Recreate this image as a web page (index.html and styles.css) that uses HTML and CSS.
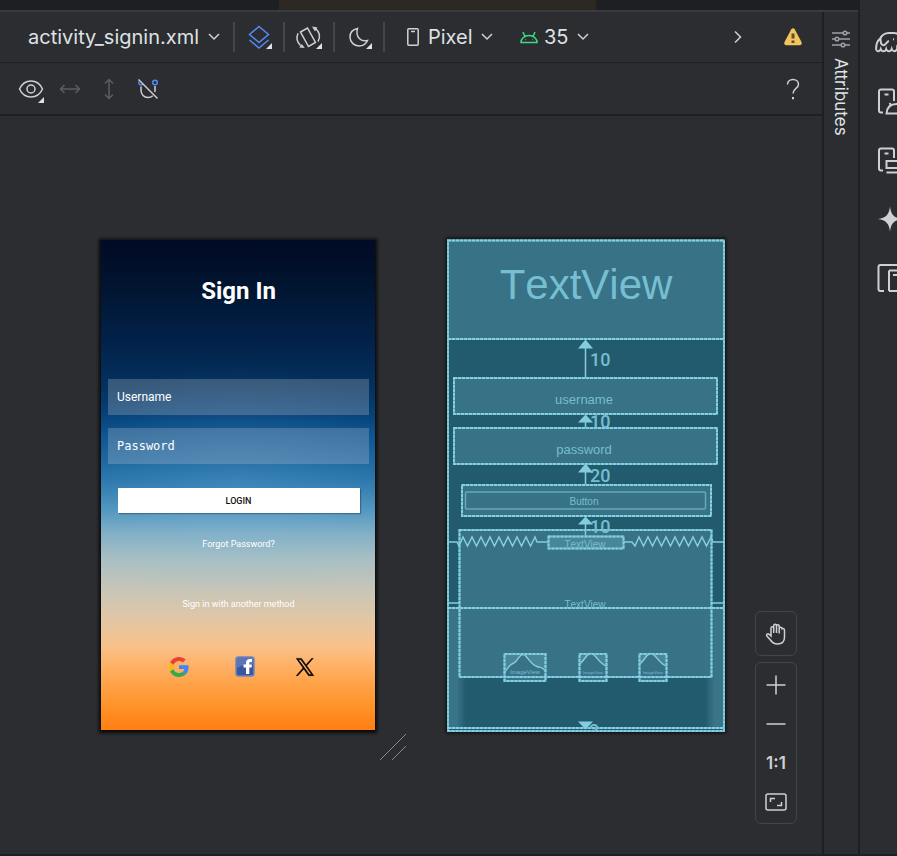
FILE: index.html
```html
<!DOCTYPE html>
<html lang="en">
<head>
<meta charset="utf-8">
<meta name="viewport" content="width=device-width, initial-scale=1">
<title>Layout editor</title>
<link rel="stylesheet" href="styles.css">
</head>
<body>
<div class="ide">
  <div class="tabs"><div class="tab-active"></div></div>
  <div class="work">
    <main class="editor">
      <header class="bar">
        <span class="pick file">
          <select aria-label="Layout file"><option>activity_signin.xml</option></select>
          <svg class="chev" viewBox="0 0 12 8"><path d="M1 1l5 5 5-5"/></svg>
        </span>
        <span class="sep"></span>
        <button class="tool wide" aria-label="Design surface">
          <svg width="26" height="26" viewBox="0 0 26 26" class="blue"><path d="M13 2.500l9.500 8-9.500 8-9.500-8z"/><path d="M3.500 16l9.500 8 9.500-8"/></svg>
          <i class="corner"></i>
        </button>
        <span class="sep"></span>
        <button class="tool wide" aria-label="Orientation">
          <svg width="26" height="26" viewBox="0 0 26 26"><path d="M4.500 8l7-4L19.500 18.500l-7 4z"/><path d="M2 9.300C.5 13 .8 18 4.500 21.500M19.500 4.500c4 3 5.300 8.500 2.500 13"/><path class="head" d="M8.800 24l-5.500-.5 2.500-3.500zM16 2.500l5.500 1-2.500 4z"/></svg>
          <i class="corner"></i>
        </button>
        <span class="sep"></span>
        <button class="tool wide" aria-label="Night mode">
          <svg width="26" height="26" viewBox="0 0 26 26"><path d="M11.500 4.500c-5 1-7.500 4.500-7.500 8.500 0 5 4 9 9 9 4 0 7-2 8.500-5.500-6 1.500-12.500-3-10-12z"/></svg>
          <i class="corner"></i>
        </button>
        <span class="sep"></span>
        <span class="pick device">
          <svg width="12" height="18" viewBox="0 0 12 18"><rect x=".8" y=".8" width="10.400" height="16.400" rx="1"/><path d="M4 3.500h4"/></svg>
          <select aria-label="Device"><option>Pixel</option></select>
          <svg class="chev" viewBox="0 0 12 8"><path d="M1 1l5 5 5-5"/></svg>
        </span>
        <span class="pick api">
          <svg width="18" height="14" viewBox="0 0 18 14" class="green"><path d="M1 12.500c0-4 3.500-7 8-7s8 3 8 7zM4.700 6L3 2M13.300 6L15 2"/><path d="M5.500 9.500h.6M12 9.500h.6"/></svg>
          <select aria-label="API level"><option>35</option></select>
          <svg class="chev" viewBox="0 0 12 8"><path d="M1 1l5 5 5-5"/></svg>
        </span>
        <span class="push"></span>
        <button class="tool more" aria-label="More"><svg width="8" height="14" viewBox="0 0 8 14"><path d="M1 1.500L6.500 7 1 12.500"/></svg></button>
        <button class="tool" aria-label="Warnings">
          <svg width="20" height="20" viewBox="0 0 20 20"><path class="warn" d="M8.300 2.300c.8-1.300 2.600-1.300 3.400 0l6.800 12.600c.8 1.500-.2 3.300-1.800 3.300H3.300c-1.600 0-2.600-1.800-1.800-3.300z"/><path class="mark" d="M10 6.500v5M10 13.500v2.500"/></svg>
        </button>
      </header>
      <div class="bar second">
        <button class="tool" aria-label="View options">
          <svg width="26" height="20" viewBox="0 0 26 20"><path d="M1.500 10C4 4.500 8 2 13 2s9 2.500 11.500 8C22 15.500 18 18 13 18S4 15.500 1.500 10z"/><circle cx="13" cy="10" r="4"/></svg>
          <i class="corner low"></i>
        </button>
        <button class="tool dim" aria-label="Expand horizontally"><svg width="22" height="12" viewBox="0 0 22 12"><path d="M1.500 6h19M5.500 2l-4 4 4 4M16.500 2l4 4-4 4"/></svg></button>
        <button class="tool dim" aria-label="Expand vertically"><svg width="12" height="22" viewBox="0 0 12 22"><path d="M6 1.500v19M2 5.500l4-4 4 4M2 16.500l4 4 4-4"/></svg></button>
        <button class="tool" aria-label="Autoconnect">
          <svg width="22" height="22" viewBox="0 0 22 22"><path d="M4 8.500V12c0 4.500 3 7.500 7 7.500 1.800 0 3.500-.6 4.800-1.800M18 8v4c0 .8-.1 1.400-.3 2"/><circle class="blue" cx="18" cy="4.500" r="2.300"/><path class="blue" d="M2 3.500c-.8 2 .5 3.500 2.500 3.500l1.500-1"/><path d="M1.500 1.500l19 19"/></svg>
        </button>
        <span class="push"></span>
        <button class="tool" aria-label="Help"><svg width="14" height="22" viewBox="0 0 14 22"><path d="M1.500 6.500C1.500 3.500 4 1.500 7 1.500s5.500 2 5.500 5c0 4-5.500 4-5.500 9"/><path class="dot" d="M7 19v2.300"/></svg></button>
      </div>

      <section class="canvas">
        <form class="phone">
          <h1>Sign In</h1>
          <input class="field" type="text" placeholder="Username" aria-label="Username">
          <input class="field mono" type="password" placeholder="Password" aria-label="Password">
          <button class="login" type="button">LOGIN</button>
          <a class="forgot" href="#">Forgot Password?</a>
          <p class="other">Sign in with another method</p>
          <div class="social">
            <a href="#" aria-label="Google"><svg width="20" height="20" viewBox="0 0 48 48"><path fill="#ea4335" d="M24 9.500c3.540 0 6.710 1.220 9.210 3.600l6.850-6.850C35.900 2.380 30.470 0 24 0 14.620 0 6.510 5.380 2.560 13.220l7.980 6.190C12.430 13.720 17.740 9.500 24 9.500z"/><path fill="#4285f4" d="M46.980 24.550c0-1.570-.15-3.090-.38-4.550H24v9.020h12.940c-.58 2.960-2.260 5.480-4.780 7.180l7.730 6c4.510-4.180 7.090-10.360 7.090-17.650z"/><path fill="#fbbc05" d="M10.530 28.590c-.48-1.450-.76-2.990-.76-4.590s.27-3.140.76-4.590l-7.980-6.190C.92 16.460 0 20.120 0 24c0 3.880.92 7.540 2.560 10.780z"/><path fill="#34a853" d="M24 48c6.480 0 11.930-2.130 15.890-5.810l-7.730-6c-2.150 1.450-4.920 2.300-8.160 2.300-6.260 0-11.570-4.220-13.470-9.910l-7.980 6.190C6.510 42.620 14.620 48 24 48z"/></svg></a>
            <a href="#" aria-label="Facebook"><svg width="20" height="21" viewBox="0 0 20 21"><rect x="1" y="1" width="18" height="19" rx="2.500" fill="#3a569f" stroke="#7186bd" stroke-width="1.500"/><path fill="#6d83bd" d="M2 2h16v6C12 8 7 9 2 12z" opacity=".7"/><path fill="#fff" d="M11 18v-6.500H8.500v-3H11V7c0-2.800 1.500-4 4-4h2v3h-1.500C14.500 6 14.300 6.500 14.300 7.300v1.200H17l-.4 3h-2.300V18z"/></svg></a>
            <a href="#" aria-label="X"><svg width="18" height="18" viewBox="0 0 24 23"><path d="M14.230 9.700L22.900 0h-2.050l-7.530 8.430L7.300 0H.36l9.100 12.750L.36 23h2.050l7.960-8.970L16.730 23h6.940zM11.400 12.870l-.92-1.270L3.150 1.500h3.160l5.920 8.160.92 1.270 7.700 10.600h-3.160z" fill="#000" stroke="#000" stroke-width=".7"/></svg></a>
          </div>
          <svg class="grip" width="28" height="28" viewBox="0 0 28 28"><path d="M1 27L27 1M13 27L27 13"/></svg>
        </form>

        <svg class="blueprint" width="278" height="493" viewBox="447 239.500 278 493" role="img" aria-label="Blueprint">
          <defs>
            <linearGradient id="sideL"><stop offset="0" stop-color="#3a7488"/><stop offset=".5" stop-color="#3a7488"/><stop offset="1" stop-color="#3a7488" stop-opacity="0"/></linearGradient>
            <linearGradient id="sideR"><stop offset="0" stop-color="#3a7488" stop-opacity="0"/><stop offset=".5" stop-color="#3a7488"/><stop offset="1" stop-color="#3a7488"/></linearGradient>
            <clipPath id="gap"><rect x="570" y="415" width="50" height="13"/></clipPath>
            <clipPath id="foot"><rect x="570" y="720" width="50" height="11"/></clipPath>
            <clipPath id="half"><rect x="540" y="595" width="100" height="13"/></clipPath>
          </defs>
          <rect class="base" x="447" y="240" width="277" height="492"/>
          <g class="box">
            <rect x="447" y="240" width="277" height="99"/>
            <rect x="453" y="378" width="264" height="37"/>
            <rect x="453" y="428" width="264" height="37"/>
            <rect x="461" y="485" width="250" height="32"/>
            <rect x="459" y="530" width="253" height="148"/>
          </g>
          <g stroke="none">
            <rect x="447" y="608" width="19" height="120" fill="url(#sideL)"/>
            <rect x="705" y="608" width="19" height="120" fill="url(#sideR)"/>
          </g>
          <g class="box light">
            <rect x="548" y="536" width="76" height="13"/>
            <rect x="504" y="654" width="42" height="28"/>
            <rect x="579" y="654" width="28" height="28"/>
            <rect x="639" y="654" width="28" height="28"/>
          </g>
          <g class="box">
            <path d="M504 674c3-4 5-9 9-10s6-9 10-9 7 10 14 12c4 2 5-1 9 6v9h-42z"/>
            <path d="M579 665c5-3 6-9 11-11 6-1 7 9 17 13v15h-28z"/>
            <path d="M639 665c5-3 6-9 11-11 6-1 7 9 17 13v15h-28z"/>
          </g>
          <g fill="none" stroke="#84cde0">
            <path d="M504 674c3-4 5-9 9-10s6-9 10-9 7 10 14 12c4 2 5-1 9 6M579 665c5-3 6-9 11-11 6-1 7 9 17 13M639 665c5-3 6-9 11-11 6-1 7 9 17 13"/>
          </g>
          <g class="solid">
            <path id="frames" d="M448 241h276v490.500H448zM448 339.500h276M454 378.500h263v36H454zM454 428.500h263v36H454zM462 485.500h249v31H462zM459.500 530.500h252v147h-252zM548.500 537h75v12h-75zM448 608.500h276M448 728.500h276M504.500 654.500h41v27h-41zM579.500 654.500h27v27h-27zM639.500 654.500h27v27h-27z"/>
          </g>
          <use href="#frames" class="dashes"/>
          <rect x="465.500" y="492.500" width="240" height="17" rx="1" fill="none" stroke="#63a9bb"/>
          <g fill="none" stroke="#84cde0">
            <path d="M585.500 345v33M585.500 420v8M585.500 470v15M585.500 522v14"/>
            <path d="M447 542.500h10l2 4 4-9 4.500 9 4.500-9 4.500 9 4.500-9 4.500 9 4.500-9 4.500 9 4.500-9 4.500 9 4.500-9 4.500 9 4.500-9 4.500 9 4.500-9 4.500 9 4.500-9 2 5H548M624 542.500h8l3 4 4-9 4.500 9 4.500-9 4.500 9 4.500-9 4.500 9 4.500-9 4.500 9 4.500-9 4.500 9 4.500-9 4.500 9 4.500-9 4.500 9 4.500-9 4.500 9 4.500-9 2 5h10M447 603.500h12M712 603.500h12"/>
          </g>
          <g fill="#84cde0" stroke="none">
            <path d="M585.500 340l7.500 9h-15zM585.500 415l7.500 8h-15zM585.500 464l7.500 9h-15zM585.500 517l7.500 8h-15zM578 722h15l-7.500 8z"/>
          </g>
          <g class="num">
            <text x="590" y="366">10</text>
            <text x="590" y="428" clip-path="url(#gap)">10</text>
            <text x="590" y="482">20</text>
            <text x="590" y="533">10</text>
            <text x="589" y="737" clip-path="url(#foot)">3</text>
          </g>
          <g class="lbl">
            <text class="xl" x="586" y="299">TextView</text>
            <text class="md" x="584" y="404">username</text>
            <text class="md" x="584" y="454">password</text>
            <text class="sm" x="584" y="505">Button</text>
            <text class="sm" x="585" y="548">TextView</text>
            <text class="sm" x="585" y="608" clip-path="url(#half)">TextView</text>
            <text class="xs" x="525" y="674">ImageView</text>
            <text class="xxs" x="593" y="674">ImageView</text>
            <text class="xxs" x="653" y="674">ImageView</text>
          </g>
        </svg>

        <div class="zoom">
          <div class="panel">
            <button aria-label="Pan"><svg width="24" height="24" viewBox="0 0 24 24"><path d="M7 14V6.200c0-2 2.700-2 2.700 0V11 3.700c0-2 2.800-2 2.800 0V11 4.200c0-2 2.700-2 2.700 0V11.500 6.700c0-2 2.800-2 2.800 0 2.200-.5 2.500.5 2.500 2V15c0 4.500-2.500 7-7 7-3.500 0-5.500-1.500-7.500-4.500L2.800 14c-1-1.800 1-2.800 2.500-1.500z"/></svg></button>
          </div>
          <div class="panel">
            <button aria-label="Zoom in"><svg width="20" height="20" viewBox="0 0 20 20"><path d="M10 .5v19M.5 10h19"/></svg></button>
            <button aria-label="Zoom out"><svg width="20" height="20" viewBox="0 0 20 20"><path d="M.5 10h19"/></svg></button>
            <button>1:1</button>
            <button aria-label="Zoom to fit"><svg width="22" height="18" viewBox="0 0 22 18"><rect x="1" y="1" width="20" height="16" rx="2"/><path d="M5.500 9V5.500H10M16.500 9v3.500H12"/></svg></button>
          </div>
        </div>
      </section>
    </main>

    <aside class="rail">
      <button>
        <svg width="20" height="18" viewBox="0 0 20 18"><path d="M1 3h11M16 3h3M1 9h3M8 9h11M1 15h9M14 15h5"/><circle cx="14" cy="3" r="1.800"/><circle cx="6" cy="9" r="1.800"/><circle cx="12" cy="15" r="1.800"/></svg>
        <span>Attributes</span>
      </button>
    </aside>
  </div>
</div>

<nav class="stripe">
  <button aria-label="Gradle"><svg width="30" height="30" viewBox="0 0 30 30"><path d="M1.200 23c-.5-6 1-9 4-11.500M5 12c2-4.500 5.500-6 9-6h5c3 0 5 1.500 6 4l4-2M1.200 23c1.500 2 3.500 1.500 4.500-1 1 3 4.500 3 5.500 0 1 3 4.500 3 5.500 0 1 3 4 3 5.500 0V19l6-5M5.500 11c0 4.500.5 7.500 3.200 7.200 2.300-.2 3-3.700 5.300-4.200M18 12.300h1"/></svg></button>
  <button aria-label="Device Manager"><svg width="30" height="30" viewBox="0 0 30 30"><path d="M8 26.500H6c-1.500 0-2-.5-2-2v-19c0-1.500.5-2 2-2h11c1.500 0 2 .5 2 2V15M9.500 8.500h4M11.500 27.500c.5-6 4-9.500 10-9.500s9.500 3.500 10 9.500zM14.500 17l2 3"/></svg></button>
  <button aria-label="Running Devices"><svg width="30" height="30" viewBox="0 0 30 30"><path d="M8 25.500H6c-1.500 0-2-.5-2-2v-18c0-1.500.5-2 2-2h11c1.500 0 2 .5 2 2V13M9.500 8.500h4M11.500 16h18v7h-18zM11.500 27.500h18"/></svg></button>
  <button aria-label="Gemini"><svg width="30" height="30" viewBox="0 0 30 30"><path class="fill" d="M15 2.500c1 8 4 11.500 12 12.500-8 1-11 4.500-12 12.500C14 19.500 11 16 3 15c8-1 11-4.500 12-12.500z"/></svg></button>
  <button aria-label="Device Explorer"><svg width="30" height="30" viewBox="0 0 30 30"><path d="M9 28H5.500c-1.500 0-2-.5-2-2V4c0-1.500.5-2 2-2H30M14 7.500h16M14 28h16M14 28V7.500M18 12h5"/></svg></button>
</nav>
</body>
</html>
```
FILE: styles.css
```css
* { box-sizing: border-box; }

body {
  margin: 0;
  min-height: 100vh;
  display: flex;
  overflow: hidden;
  background: #2b2d30;
  border-bottom: 2px solid #1e1f22;
  color: #dfe1e5;
  font-family: Inter, "Liberation Sans", sans-serif;
  font-size: 20px;
}

button, select, input { font: inherit; color: inherit; border: 0; padding: 0; background: none; }
svg { display: block; flex: none; fill: none; stroke: #ced0d6; stroke-width: 1.5; overflow: visible; }
.blue { stroke: #548af7; }
.green { stroke: #3ddc84; }
.head { fill: #ced0d6; stroke: none; }

.ide { flex: 1; min-width: 0; display: flex; flex-direction: column; border-right: 2px solid #1e1f22; }
.tabs { height: 10px; display: flex; background: #1e1f22; padding-left: 279px; }
.tab-active { width: 317px; background: #2d2822; }
.work { flex: 1; display: flex; border-top: 2px solid #393b40; }
.editor { flex: 1; min-width: 0; display: flex; flex-direction: column; }

/* Toolbars */
.bar { height: 51px; display: flex; align-items: center; padding: 0 10px 0 28px; border-bottom: 1px solid #1e1f22; }
.bar.second { height: 53px; padding-left: 11px; border-bottom-width: 2px; }
.pick { display: flex; align-items: center; }
.pick select { appearance: none; line-height: 24px; outline: 0; }
.chev { width: 12px; height: 8px; margin-left: 8px; pointer-events: none; }
.file { margin-right: 13px; }
.device { margin-left: 22px; }
.device select { margin-left: 9px; }
.api { margin-left: 27px; }
.api select { margin-left: 6px; }
.sep { width: 2px; height: 30px; background: #43454a; }
.push { flex: 1; }
.tool { position: relative; width: 39px; height: 40px; display: flex; align-items: center; justify-content: center; }
.tool.wide { width: 48px; }
.more { margin-right: 16px; }
.corner { position: absolute; right: 11px; bottom: 8px; border: 3px solid #dfe1e5; border-left-color: transparent; border-top-color: transparent; }
.corner.low { right: 6px; bottom: 6px; }
.dim svg { stroke: #5a5d63; }
.warn { fill: #f2c55c; stroke: none; }
.mark { stroke: #5e4d33; stroke-width: 3; }
.dot { stroke-width: 2; }

/* Design surface */
.canvas { position: relative; flex: 1; display: flex; align-items: flex-start; gap: 72px; padding: 123px 0 0 101px; }

.phone {
  position: relative;
  width: 274px;
  height: 490px;
  margin-top: 1px;
  padding: 35px 6px 0 7px;
  display: flex;
  flex-direction: column;
  align-items: center;
  color: #fff;
  font-family: Roboto, sans-serif;
  font-size: 9px;
  line-height: 12px;
  box-shadow: 0 1px 3px 2px #0a0a0b;
  background:
    radial-gradient(ellipse 65% 25% at 50% 50%, rgba(120, 195, 235, .18), transparent),
    linear-gradient(#020a24, #01142f 9%, #02224a 21%, #03315f 30%, #05427a 36%, #0c5390 40%, #1a649f 45%, #3079ae 50%, #5095be 55%, #84afc5 60%, #a8bfc3 65%, #c6c5b8 71%, #dfc7a7 77%, #fac189 83%, #ffac5c 88%, #ff9730 94%, #ff7f12);
}
.phone h1 { margin: 0 0 72px; font-size: 24px; line-height: 32px; font-weight: 700; }
.field { width: 100%; height: 36px; margin: 0 0 13px; padding: 0 9px; font-size: 12px; background: rgba(194, 198, 206, .28); }
.field.mono { font-family: "DejaVu Sans Mono", monospace; }
.field::placeholder { color: #fff; opacity: 1; }
.field + .login { margin-top: 11px; }
.login { width: calc(100% - 19px); height: 25px; background: #fff; color: #111; font-weight: 500; box-shadow: 1px 1px 1px rgba(40, 60, 90, .5); }
.forgot { margin-top: 25px; color: inherit; text-decoration: none; }
.other { margin: 48px 0 0; }
.social { display: flex; align-items: center; gap: 32px; margin-top: 46px; }
.social a { width: 28px; display: flex; justify-content: center; }
.social a:first-child { width: 40px; }
.social svg { stroke: none; }
.grip { position: absolute; right: -32px; bottom: -31px; stroke: #86888c; stroke-width: 1; }

/* Blueprint */
.blueprint { box-shadow: 0 0 3px 1px #0c0c0e; }
.base { fill: #235b6e; stroke: none; }
.box { fill: #387286; stroke: none; }
.box.light { fill: #4a8699; }
.solid { stroke: #5ea6b9; stroke-width: 2; }
.dashes { stroke: #84cfe2; stroke-width: 2; stroke-dasharray: 3 1; }
.num { fill: #76bed1; stroke: none; font: 500 18px Roboto, sans-serif; }
.lbl { fill: #76bed1; stroke: none; font-family: "Liberation Sans", sans-serif; font-kerning: none; text-anchor: middle; }
.xl { font-size: 42px; }
.md { font-size: 13px; }
.sm { font-size: 10px; }
.xs { font-size: 6px; }
.xxs { font-size: 4px; }

/* Zoom controls */
.zoom { position: absolute; right: 25px; bottom: 30px; display: flex; flex-direction: column; gap: 6px; }
.panel { width: 42px; padding: 2px 0; border: 1px solid #43454a; border-radius: 6px; background: #2b2d30; }
.panel button { width: 100%; height: 39px; display: flex; align-items: center; justify-content: center; font-size: 17px; font-weight: 600; color: #ced0d6; }

/* Side rails */
.rail { width: 36px; border-left: 2px solid #1e1f22; }
.rail button { width: 100%; padding-top: 18px; display: flex; flex-direction: column; align-items: center; gap: 10px; }
.rail span { writing-mode: vertical-rl; font-size: 17px; line-height: 20px; }
.rail svg { stroke: #9da0a8; }
.stripe { width: 37px; padding: 12px 0 0 15px; overflow: hidden; }
.stripe button { height: 59px; display: flex; align-items: center; }
.stripe svg { stroke-width: 2; }
.stripe .fill { fill: #ced0d6; stroke: none; }
```
